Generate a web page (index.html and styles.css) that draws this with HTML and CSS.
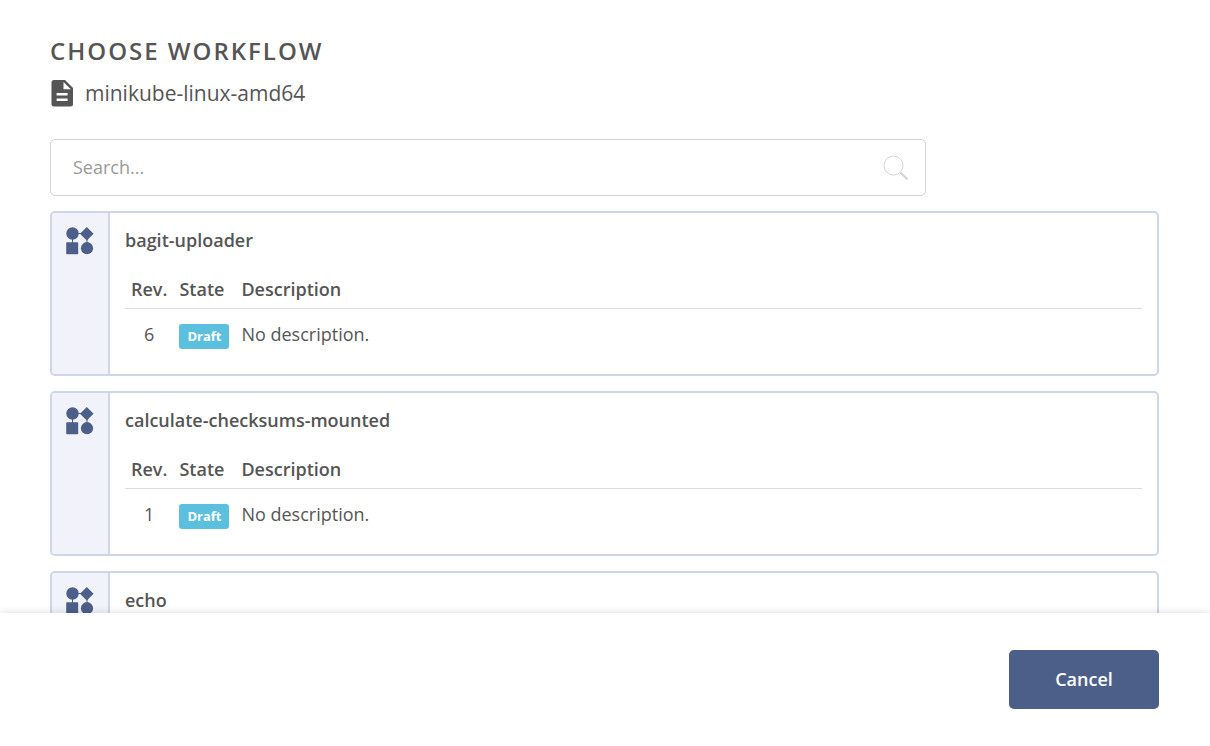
FILE: index.html
```html
<!DOCTYPE html>
<html lang="en">
<head>
<meta charset="utf-8">
<meta name="viewport" content="width=device-width, initial-scale=1">
<title>Choose workflow</title>
<link rel="stylesheet" href="styles.css">
</head>
<body>
<svg class="sprite" aria-hidden="true">
  <symbol id="workflow" viewBox="0 0 28 28">
    <path d="M6 6.500h16M6.500 6v16M21 6v16" fill="none" stroke="currentColor" stroke-width="1"/>
    <circle cx="6.500" cy="6.500" r="6.200"/>
    <path d="M20.800 0 27.600 6.700 20.800 13.500 14 6.700z"/>
    <rect x="0.200" y="15.200" width="12" height="12" rx="0.600"/>
    <circle cx="21" cy="21.200" r="6.100"/>
  </symbol>
</svg>
<main class="content">
  <header class="heading">
    <h1 class="title">Choose workflow</h1>
    <p class="file">
      <svg class="file-icon" viewBox="0 0 22 27" aria-hidden="true">
        <path fill-rule="evenodd" d="M3 0H14l8 8V24a2.500 2.500 0 0 1-2.500 2.500H3A2.500 2.500 0 0 1 .5 24V2.500A2.500 2.500 0 0 1 3 0zM12.500 2v7.300h7.300zM5.600 13v2.400h11V13zM5.600 18.600V21h11v-2.400z"/>
      </svg>
      <span>minikube-linux-amd64</span>
    </p>
  </header>
  <div class="search">
    <input class="search-input" type="text" placeholder="Search..." aria-label="Search workflows">
    <svg class="search-icon" viewBox="0 0 26 26" aria-hidden="true">
      <circle cx="10.500" cy="10.500" r="9.500"/>
      <path d="M17.500 17.500 24.500 24.500" stroke-width="1.800"/>
    </svg>
  </div>
  <section class="card">
    <div class="rail"><svg class="workflow-icon" aria-hidden="true"><use href="#workflow"/></svg></div>
    <div class="card-body">
      <h2 class="name">bagit-uploader</h2>
      <table class="revisions">
        <thead><tr><th class="rev">Rev.</th><th class="state">State</th><th>Description</th></tr></thead>
        <tbody><tr><td class="rev">6</td><td class="state"><span class="badge">Draft</span></td><td>No description.</td></tr></tbody>
      </table>
    </div>
  </section>
  <section class="card">
    <div class="rail"><svg class="workflow-icon" aria-hidden="true"><use href="#workflow"/></svg></div>
    <div class="card-body">
      <h2 class="name">calculate-checksums-mounted</h2>
      <table class="revisions">
        <thead><tr><th class="rev">Rev.</th><th class="state">State</th><th>Description</th></tr></thead>
        <tbody><tr><td class="rev">1</td><td class="state"><span class="badge">Draft</span></td><td>No description.</td></tr></tbody>
      </table>
    </div>
  </section>
  <section class="card">
    <div class="rail"><svg class="workflow-icon" aria-hidden="true"><use href="#workflow"/></svg></div>
    <div class="card-body">
      <h2 class="name">echo</h2>
    </div>
  </section>
</main>
<footer class="actions">
  <button class="cancel" type="button">Cancel</button>
</footer>
</body>
</html>
```
FILE: styles.css
```css
* { box-sizing: border-box; }

body {
  margin: 0;
  height: 100vh;
  display: flex;
  flex-direction: column;
  background: #fff;
  color: #555;
  font: 400 18px/24px "Open Sans", "Noto Sans", sans-serif;
}

.sprite { display: none; }

.content {
  flex: 1;
  min-height: 0;
  overflow: hidden;
  padding: 33px 51px 0 50px;
}

.heading { margin-bottom: 30px; }

.title {
  margin: 0 0 8px;
  font-size: 24px;
  line-height: 36px;
  font-weight: 600;
  letter-spacing: 2px;
  text-transform: uppercase;
}

.file {
  display: flex;
  align-items: center;
  gap: 12px;
  margin: 0;
  padding-left: 1px;
  font-size: 21px;
  line-height: 32px;
}

.file-icon { width: 22px; height: 27px; fill: currentColor; }

.search {
  display: flex;
  align-items: center;
  width: 79%;
  height: 57px;
  padding: 0 16px 0 22px;
  border: 1px solid #d2d2d2;
  border-radius: 5px;
}

.search-input {
  flex: 1;
  min-width: 0;
  padding: 0 0 2px;
  border: 0;
  outline: 0;
  background: none;
  color: inherit;
  font: inherit;
}

.search-input::placeholder { color: #999; opacity: 1; }

.search-icon {
  width: 26px;
  height: 26px;
  fill: none;
  stroke: #d2d2d2;
}

.card {
  display: flex;
  min-height: 165px;
  margin-top: 15px;
  border: 2px solid #cdd5ea;
  border-radius: 5px;
  overflow: hidden;
}

.rail {
  flex: none;
  width: 58px;
  padding: 14px 0 0 14px;
  border-right: 2px solid #cdd5ea;
  background: #f2f3fa;
}

.workflow-icon {
  display: block;
  width: 28px;
  height: 28px;
  color: #4c5f89;
  fill: currentColor;
}

.card-body {
  flex: 1;
  padding: 15px;
}

.name {
  margin: 0 0 20px;
  font-size: 18px;
  line-height: 24px;
  font-weight: 600;
}

.revisions {
  width: 100%;
  border-collapse: collapse;
  text-align: left;
}

.revisions th {
  padding: 5px 6px 7px;
  border-bottom: 1px solid #ddd;
  font-weight: 600;
}

.revisions td { padding: 13px 6px 0; vertical-align: top; }

.revisions .rev { width: 48px; text-align: center; }
.revisions .state { width: 62px; }

.badge {
  display: block;
  width: 50px;
  margin-top: 2px;
  border-radius: 3px;
  background: #5bc0de;
  color: #fff;
  font-size: 13px;
  line-height: 25px;
  font-weight: 700;
  text-align: center;
}

.actions {
  position: relative;
  display: flex;
  justify-content: flex-end;
  padding: 37px 51px;
  background: #fff;
  box-shadow: 0 0 8px rgba(0, 0, 0, 0.15);
}

.cancel {
  width: 150px;
  height: 59px;
  padding-bottom: 3px;
  border: 0;
  border-radius: 5px;
  background: #4c5f89;
  color: #fff;
  font: inherit;
  font-weight: 600;
}
```
